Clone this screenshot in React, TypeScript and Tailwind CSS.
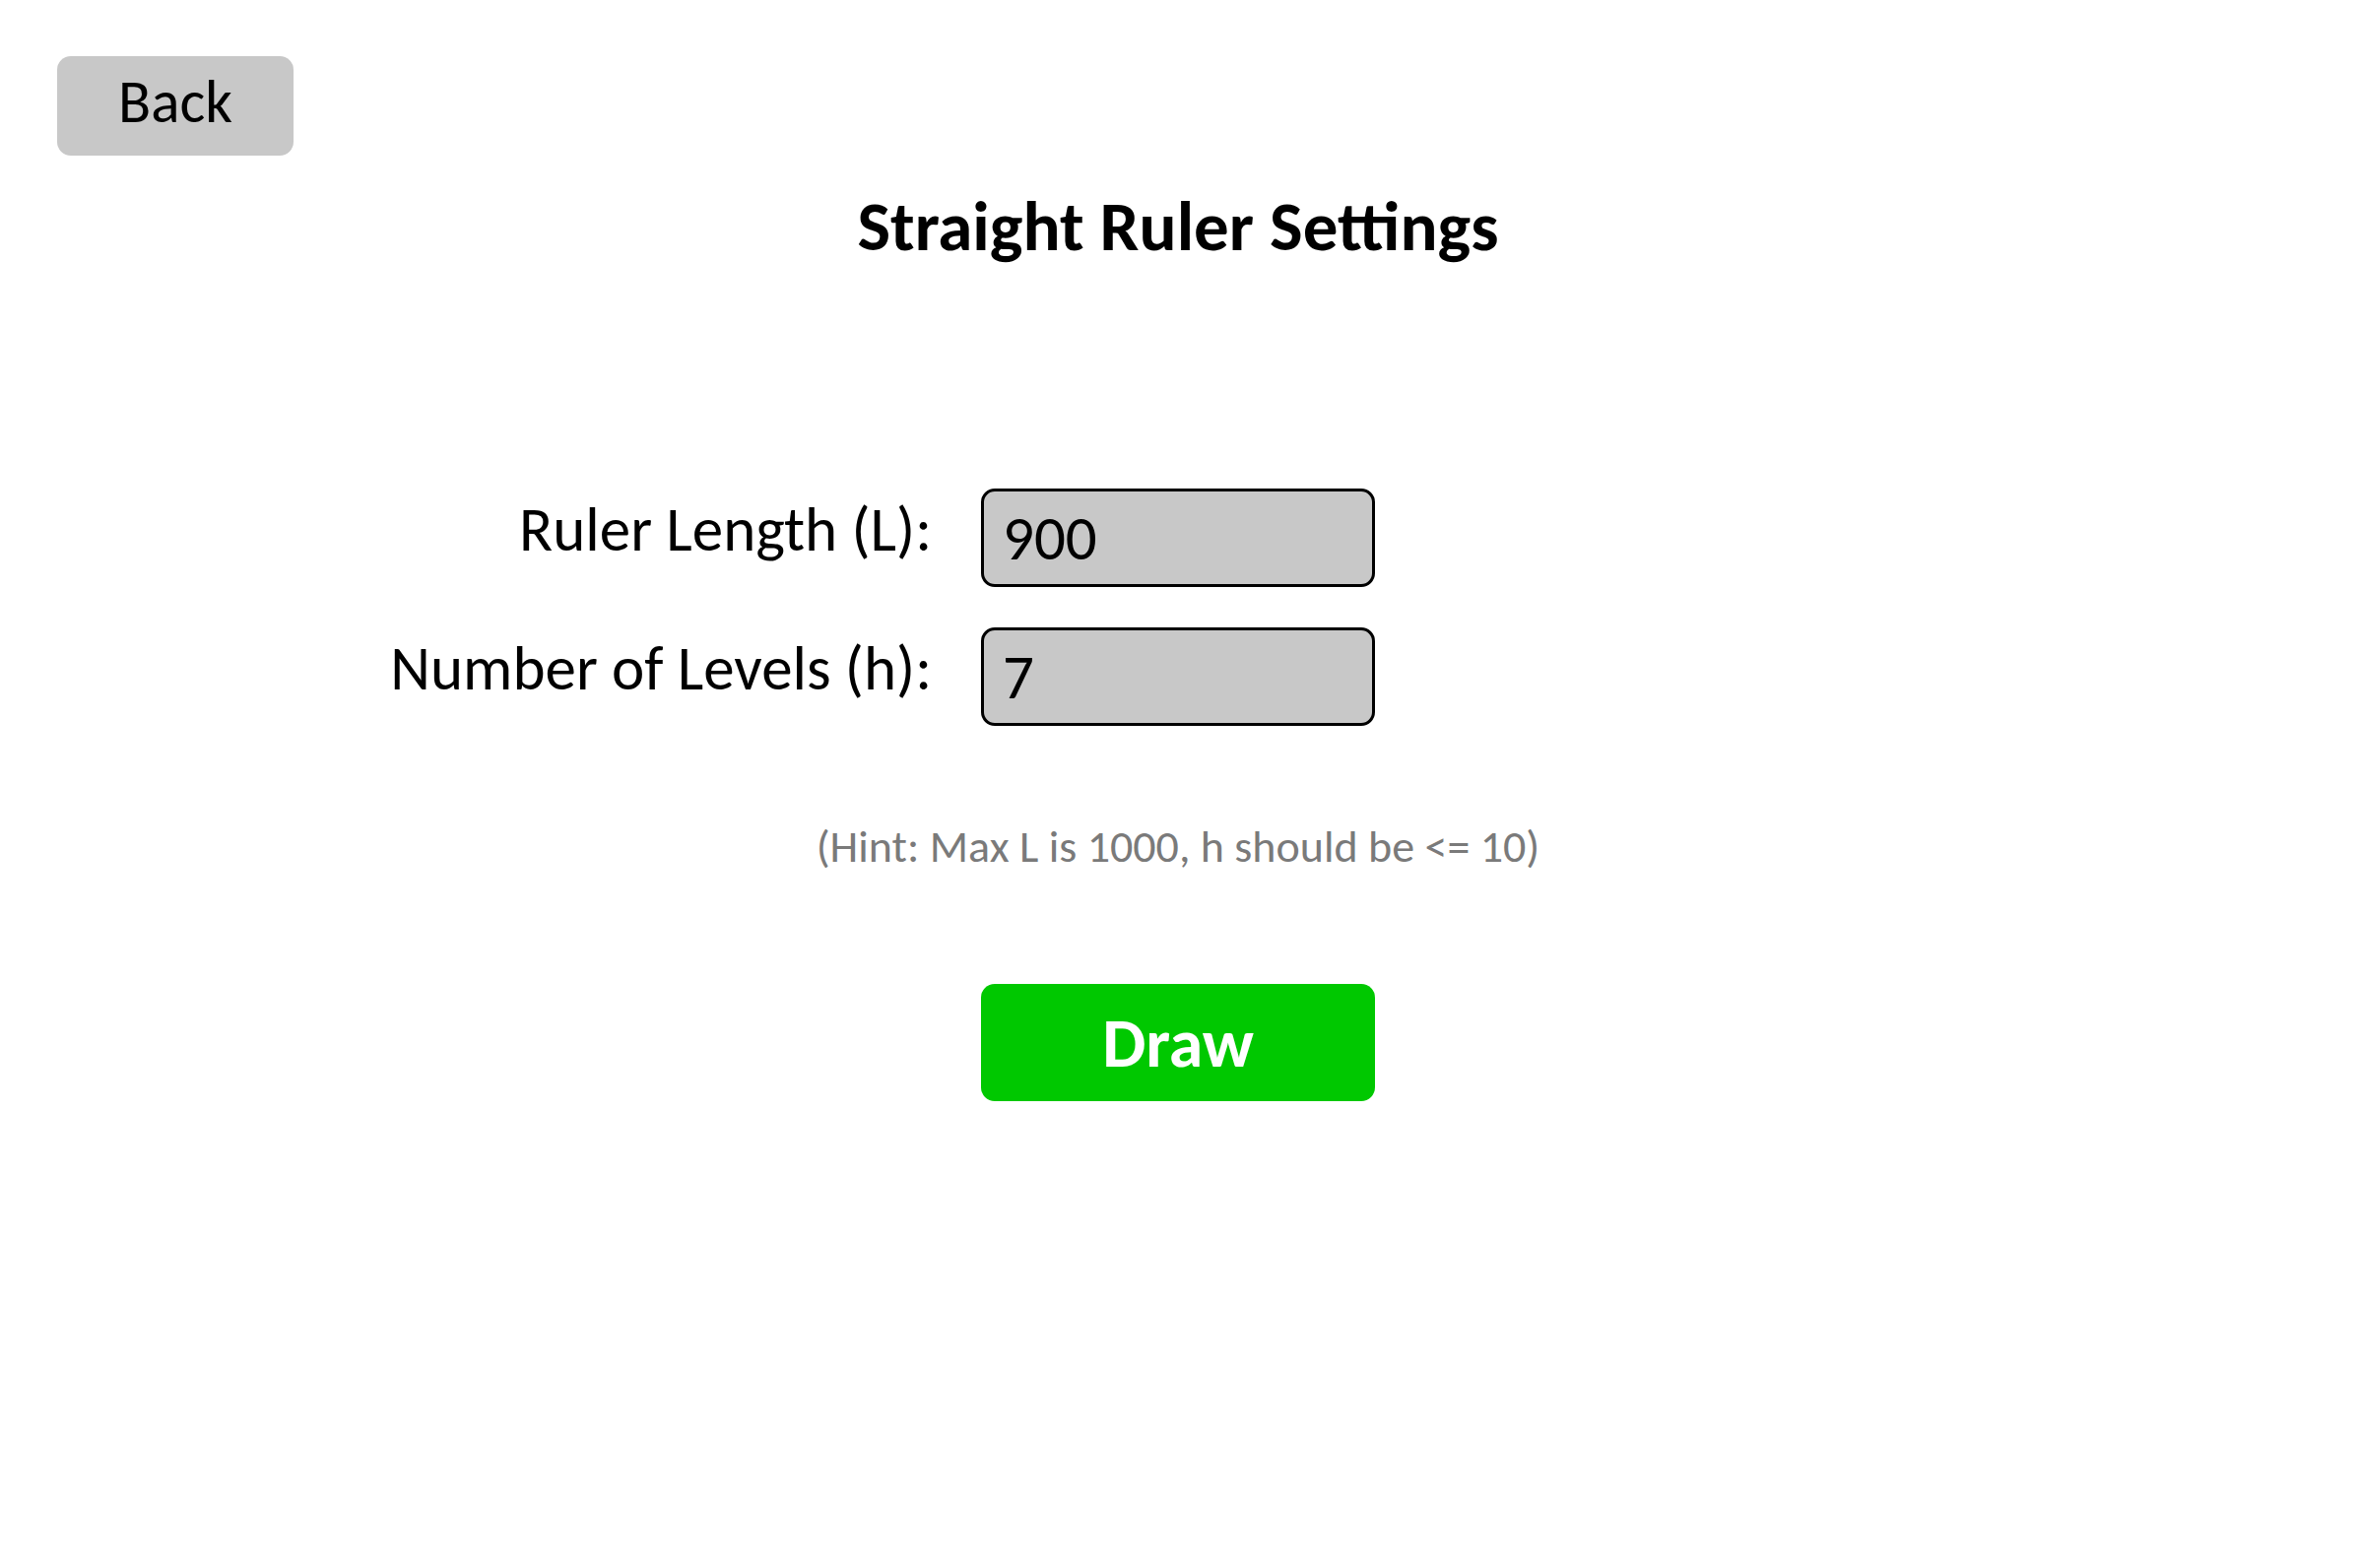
import React from "react";

const font = "font-['Carlito','Calibri','Lato','Open_Sans',sans-serif]";

export default function App() {
  return (
    <div className={`min-h-screen w-full bg-white text-black ${font}`}>
      <div className="pl-[58px] pt-[57px]">
        <button className="flex h-[101px] w-[240px] items-center justify-center rounded-[14px] bg-[#c8c8c8] pb-[8px] text-[61px] leading-none text-black">
          Back
        </button>
      </div>

      <h1 className="mt-[36px] text-center text-[71px] font-bold leading-none">
        Straight Ruler Settings
      </h1>

      <div className="mt-[231px] grid grid-cols-[1fr_400px_1fr] items-center gap-x-[50px] gap-y-[41px]">
        <label className="pb-[18px] text-right text-[63px] leading-none">Ruler Length (L):</label>
        <div className="flex h-[100px] w-[400px] items-center rounded-[14px] border-[3px] border-black bg-[#c8c8c8] px-[19px] text-[63px] leading-none">
          900
        </div>
        <div />
        <label className="pb-[18px] text-right text-[63px] leading-none">Number of Levels (h):</label>
        <div className="flex h-[100px] w-[400px] items-center rounded-[14px] border-[3px] border-black bg-[#c8c8c8] px-[19px] text-[63px] leading-none">
          7
        </div>
        <div />
      </div>

      <p className="mt-[99px] text-center text-[46px] font-light leading-none text-[#7a7a7a]">
        (Hint: Max L is 1000, h should be &lt;= 10)
      </p>

      <div className="mt-[117px] flex justify-center">
        <button className="flex h-[119px] w-[400px] items-center justify-center rounded-[14px] bg-[#00c800] text-[70px] font-bold leading-none text-white">
          Draw
        </button>
      </div>
    </div>
  );
}
